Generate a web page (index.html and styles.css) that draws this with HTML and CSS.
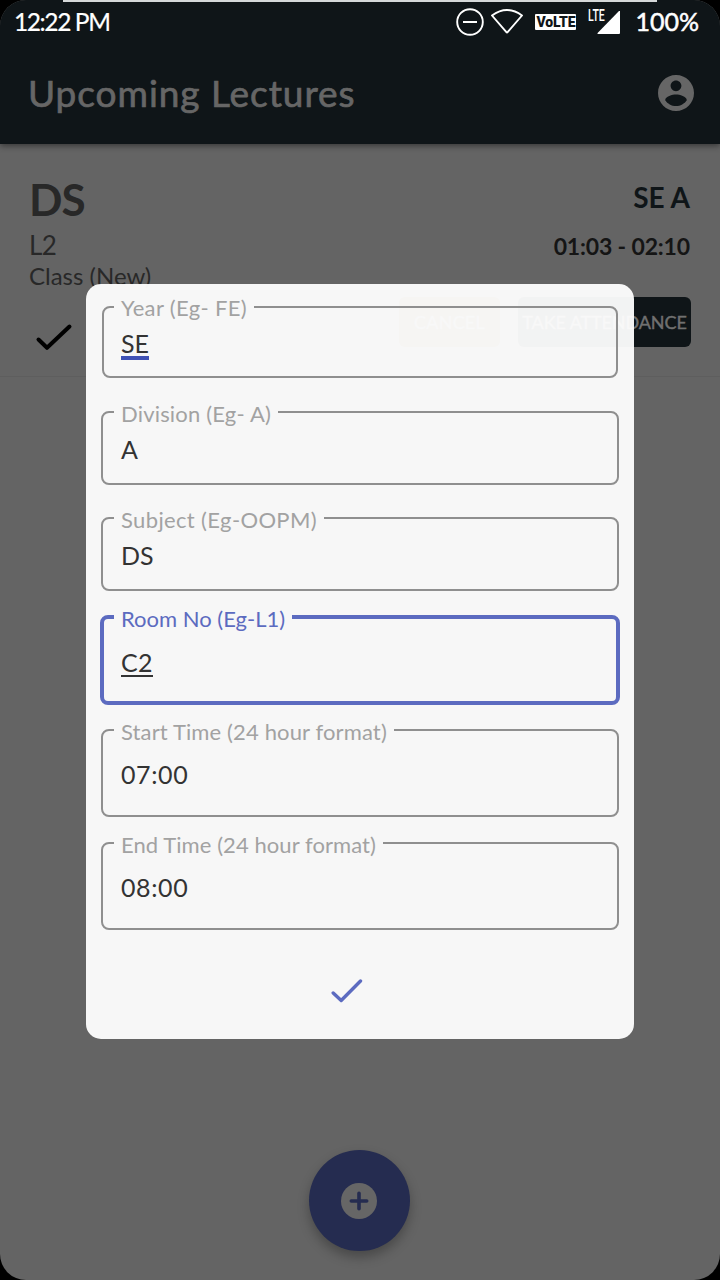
FILE: index.html
```html
<!DOCTYPE html>
<html lang="en">
<head>
<meta charset="utf-8">
<title>Upcoming Lectures</title>
<link rel="stylesheet" href="styles.css">
</head>
<body>
<div class="screen">
  <div class="edge-line"></div>
  <header class="top">
    <div class="status">
      <span class="t clock">12:22 PM</span>
      <div class="status-icons">
        <svg class="dnd" width="28" height="28" viewBox="0 0 28 28"><circle cx="14" cy="14" r="12.8" fill="none" stroke="#fff" stroke-width="1.9"/><path d="M7 14H21" stroke="#fff" stroke-width="2"/></svg>
        <svg class="wifi" width="34" height="28" viewBox="0 0 34 28"><path d="M2 7.5Q17-3.5 32 7.5L17.6 24.2Q17 25 16.4 24.2Z" fill="none" stroke="#fff" stroke-width="1.9" stroke-linejoin="round"/></svg>
        <span class="volte"><span class="t">VoLTE</span></span>
        <div class="signal"><span class="t lte">LTE</span><svg width="24" height="24" viewBox="0 0 24 24"><path d="M22 0H23V22Q23 23 22 23H1Q0 23 .6 22Z" fill="#fff"/></svg></div>
        <span class="t battery">100%</span>
      </div>
    </div>
    <div class="appbar">
      <h1 class="t title">Upcoming Lectures</h1>
      <svg class="account" width="36" height="36" viewBox="2 2 20 20"><path fill="#666" d="M12 2C6.48 2 2 6.48 2 12s4.48 10 10 10 10-4.48 10-10S17.52 2 12 2zm0 3c1.66 0 3 1.34 3 3s-1.34 3-3 3-3-1.34-3-3 1.34-3 3-3zm0 14.2c-2.5 0-4.71-1.28-6-3.22.03-1.99 4-3.08 6-3.08 1.99 0 5.97 1.09 6 3.08-1.29 1.94-3.5 3.22-6 3.22z"/></svg>
    </div>
  </header>
  <section class="lecture">
    <div class="info">
      <span class="t subject">DS</span>
      <span class="t room">L2</span>
      <span class="t kind">Class (New)</span>
      <svg class="tick" width="38" height="30" viewBox="0 0 38 30"><path d="M3.5 17.5L12 25.8L34.5 4.5" fill="none" stroke="#000" stroke-width="4" stroke-linecap="round" stroke-linejoin="round"/></svg>
    </div>
    <div class="slot">
      <span class="t division">SE A</span>
      <span class="t time">01:03 - 02:10</span>
      <div class="actions">
        <button class="btn cancel"><span class="t">CANCEL</span></button>
        <button class="btn take"><span class="t">TAKE ATTENDANCE</span></button>
      </div>
    </div>
  </section>
  <div class="fab"><svg width="36" height="36" viewBox="0 0 36 36"><circle cx="18" cy="18" r="18" fill="#666"/><path d="M18 10.3V25.7M10.3 18H25.7" stroke="#252c50" stroke-width="3.6" stroke-linecap="round"/></svg></div>
  <form class="dialog">
    <fieldset class="field first"><legend><span class="t year-label">Year (Eg- FE)</span></legend><span class="t value composing">SE</span></fieldset>
    <fieldset class="field"><legend><span class="t division-label">Division (Eg- A)</span></legend><span class="t value">A</span></fieldset>
    <fieldset class="field"><legend><span class="t subject-label">Subject (Eg-OOPM)</span></legend><span class="t value">DS</span></fieldset>
    <fieldset class="field focus"><legend><span class="t">Room No (Eg-L1)</span></legend><span class="t value editing">C2</span></fieldset>
    <fieldset class="field tall"><legend><span class="t start-label">Start Time (24 hour format)</span></legend><span class="t value">07:00</span></fieldset>
    <fieldset class="field tall last"><legend><span class="t end-label">End Time (24 hour format)</span></legend><span class="t value">08:00</span></fieldset>
    <svg class="confirm" width="32" height="26" viewBox="0 0 32 26"><path d="M2.2 15L10.2 22.5L29.5 3" fill="none" stroke="#5c6bc0" stroke-width="3.4" stroke-linecap="round" stroke-linejoin="round"/></svg>
  </form>
</div>
</body>
</html>
```

FILE: styles.css
```css
* { box-sizing: border-box; }
body { margin: 0; background: #000; font-family: Lato, "Open Sans", sans-serif; }
.t { white-space: nowrap; }
.screen { position: relative; width: 720px; height: 1280px; overflow: hidden; border-radius: 26px; background: #646464; }
.edge-line { position: absolute; z-index: 3; top: 0; left: 63px; width: 594px; height: 2px; background: #d5d8d9; }
.top { position: relative; height: 144px; background: #0f1518; box-shadow: 0 2px 6px rgba(0,0,0,.45); }
.status { display: flex; justify-content: space-between; align-items: center; height: 44px; padding: 0 21px 0 14px; color: #fff; }
.clock { padding-bottom: 2px; font-size: 24.5px; letter-spacing: -1.4px; -webkit-text-stroke: .2px #fff; }
.status-icons { display: flex; align-items: center; }
.wifi { margin-left: 6px; }
.volte { display: flex; align-items: center; justify-content: center; width: 41px; height: 16px; margin-left: 11px; border-radius: 1px; background: #fff; color: #0f1518; font: 900 14px/16px Roboto, sans-serif; letter-spacing: -.2px; }
.signal { display: flex; align-items: flex-start; height: 26px; margin-left: 12px; }
.lte { display: block; flex: none; width: 9px; font: 500 16px/13px Roboto, sans-serif; transform: scaleX(.66); transform-origin: left; }
.signal svg { flex: none; margin-top: 2px; }
.battery { margin-left: 14px; padding-bottom: 2px; font-size: 25px; -webkit-text-stroke: .5px #fff; }
.appbar { display: flex; justify-content: space-between; align-items: center; height: 100px; padding: 0 26px 3px 28px; color: #666; }
.title { margin: 0; font-size: 37px; font-weight: 400; letter-spacing: .95px; -webkit-text-stroke: .7px #666; }
.lecture { display: flex; justify-content: space-between; height: 233px; padding: 31px 30px 0 29px; border-bottom: 1px solid #5e5e5e; }
.info { display: flex; flex-direction: column; align-items: flex-start; color: #282828; }
.subject { font-size: 44px; font-weight: 700; line-height: 49px; letter-spacing: -1px; }
.room { padding-top: 4px; font-size: 26px; line-height: 34px; letter-spacing: -.5px; }
.kind { font-size: 24px; line-height: 28px; }
.tick { margin: 32px 0 0 6px; }
.slot { display: flex; flex-direction: column; align-items: flex-end; }
.division { font-size: 28px; font-weight: 700; line-height: 44px; color: #0f1518; }
.time { padding-top: 2px; font-size: 23px; font-weight: 700; line-height: 50px; letter-spacing: -.15px; color: #151515; }
.actions { display: flex; gap: 18px; margin: 26px -1px 0 0; }
.btn { height: 50px; padding: 0; border: 0; border-radius: 6px; font: 400 18px/50px Lato, sans-serif; color: #707070; -webkit-text-stroke: .4px #707070; }
.cancel { width: 101px; background: #543e1e; letter-spacing: .2px; }
.take { width: 173px; background: #0f1518; letter-spacing: -.1px; }
.fab { position: absolute; left: 309px; top: 1150px; display: flex; align-items: center; justify-content: center; width: 101px; height: 101px; padding-right: 1px; border-radius: 50%; background: #252c50; box-shadow: 0 6px 12px rgba(0,0,0,.28); }
.dialog { position: absolute; left: 86px; top: 284px; display: flex; flex-direction: column; width: 548px; height: 755px; padding: 22px 15px 0; border-radius: 15px; background: rgba(255,255,255,.95); }
.field { width: 518px; height: 74px; min-width: 0; margin: 0 0 32px; padding: 0 11px; border: 2px solid #8f8f8f; border-radius: 8px; }
.field.first { width: 516px; height: 72px; margin: 0 1px 33px; padding: 0 10px; }
.field.focus { width: 520px; height: 90px; margin: -8px -1px 24px; padding: 0 10px; border: 4px solid #5c6bc0; }
.field.tall { height: 88px; margin-bottom: 25px; }
.field legend { height: 2px; padding: 0 7px; font-size: 22px; line-height: 6px; color: #a2a2a2; }
.field.first legend { line-height: 4px; }
.field.focus legend { height: 4px; line-height: 8px; color: #5c6bc0; }
.year-label { letter-spacing: .34px; }
.division-label { letter-spacing: .18px; }
.subject-label { letter-spacing: .36px; }
.start-label { letter-spacing: .13px; }
.end-label { letter-spacing: .07px; }
.value { display: inline-block; height: 36px; margin: 18px 7px 0; font-size: 25px; line-height: 36px; color: #333; }
.first .value { margin-top: 17px; }
.composing { height: 35px; border-bottom: 4px solid #3f51b5; }
.focus .value { margin-top: 25px; letter-spacing: .4px; }
.editing { height: 33px; border-bottom: 2px solid #333; }
.tall .value { margin-top: 25px; letter-spacing: .6px; }
.confirm { margin-left: 230px; margin-top: 23px; }
```
